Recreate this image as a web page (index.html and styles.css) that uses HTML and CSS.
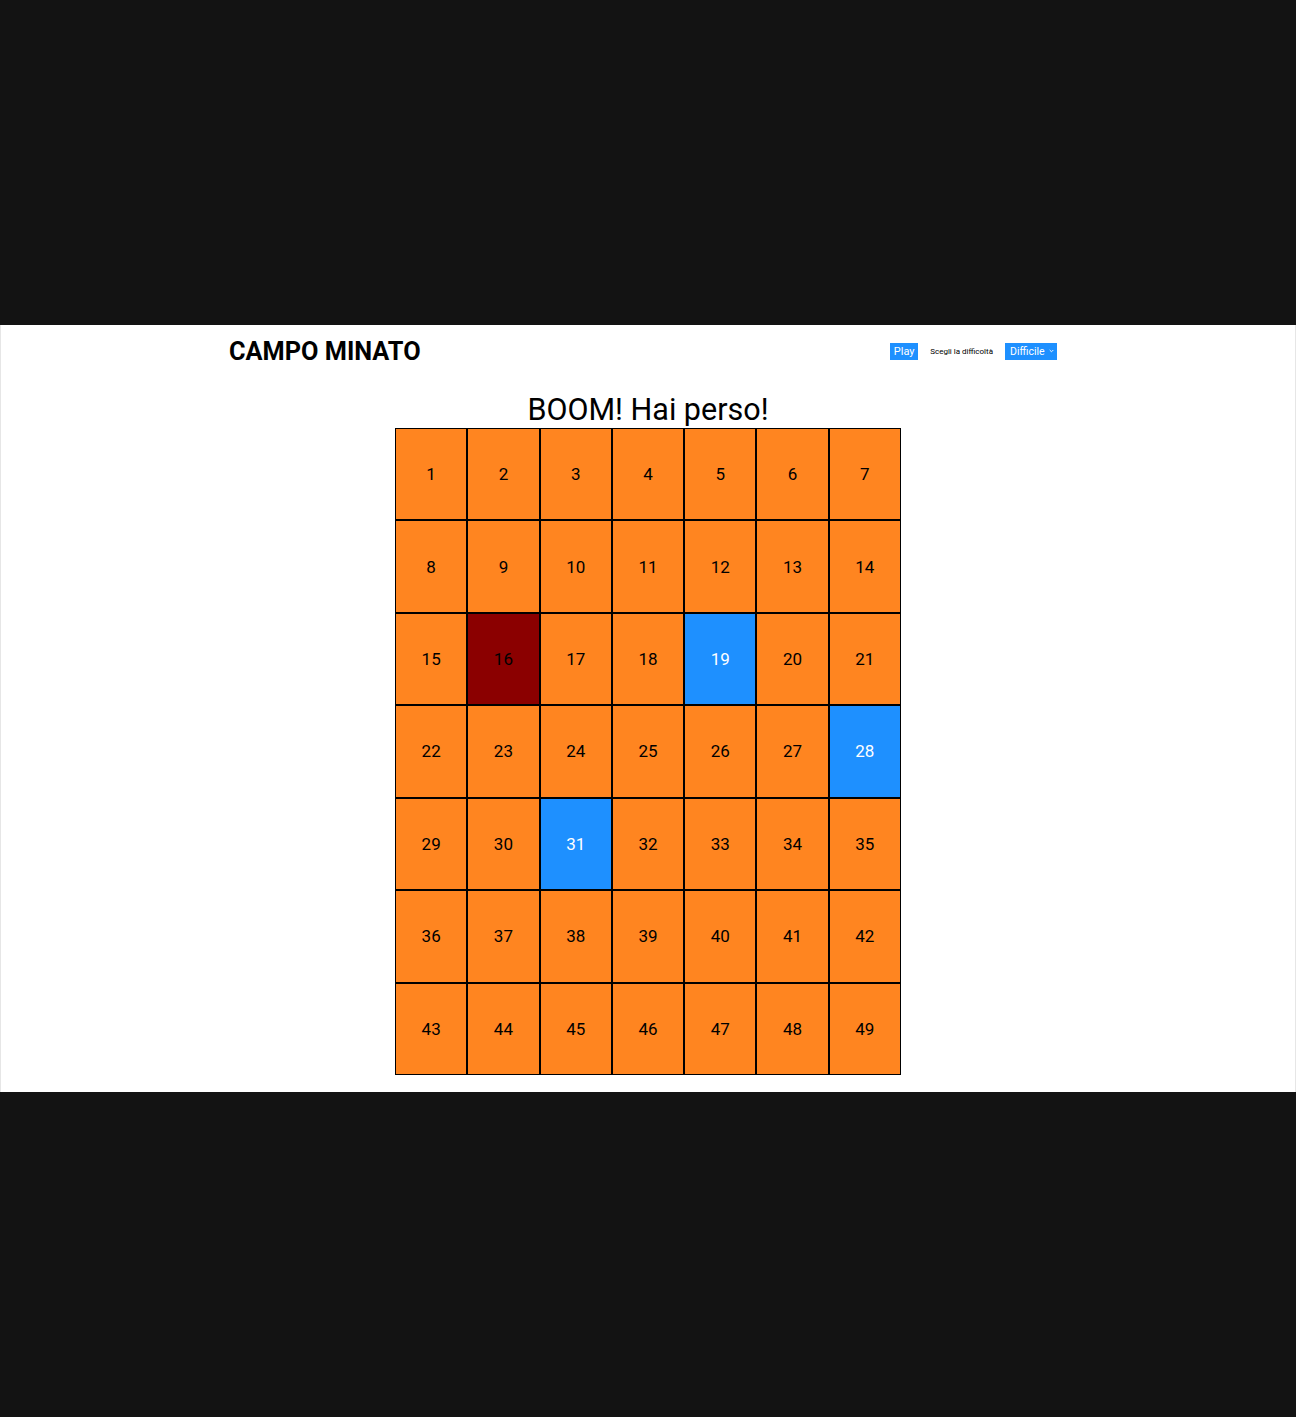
FILE: index.html
```html
<!DOCTYPE html>
<html>
<head>
	<meta charset="utf-8">
	<title>Campo Minato</title>
	<link rel="stylesheet" href="styles.css">
</head>
<body>
<div id="page">
	<div class="head">
		<h1 class="logo">CAMPO MINATO</h1>
		<div class="controls">
			<button class="btn">Play</button>
			<label class="label" for="level">Scegli la difficoltà</label>
			<div class="select" id="level">
				<span>Difficile</span>
				<svg width="5" height="4" viewBox="0 0 5 4"><path d="M0.7 1 L2.5 2.8 L4.3 1" fill="none" stroke="#fff" stroke-width="0.9"/></svg>
			</div>
		</div>
	</div>
	<h2 class="msg">BOOM! Hai perso!</h2>
	<div id="grid"></div>
</div>

<script type="text/javascript">
	var grid=document.getElementById('grid');
	var bombs=[16];
	var safe=[19,28,31];
	for(var i=1;i<=49;i++){
		var cell=document.createElement('div');
		cell.className='cell';
		if(bombs.indexOf(i)!=-1) cell.className+=' bomb';
		if(safe.indexOf(i)!=-1) cell.className+=' clicked';
		cell.innerHTML=i;
		grid.appendChild(cell);
	}
</script>
</body>
</html>
```

FILE: styles.css
```css
html,body{
	margin: 0;
	padding: 0;
}
body{
	background: #131313;
	min-height: 1417px;
	display: flex;
	flex-direction: column;
	justify-content: center;
	font-family: Roboto, "Liberation Sans", sans-serif;
}
#page{
	height: 767px;
	background: #fff;
	border-left: 1px solid #e6e6e6;
	border-right: 1px solid #e6e6e6;
	box-sizing: border-box;
}
.head{
	width: 838px;
	height: 52px;
	margin: 0 auto;
	padding-right: 10px;
	box-sizing: border-box;
	display: flex;
	align-items: center;
	justify-content: space-between;
}
.logo{
	margin: 0;
	font-size: 25.3px;
	font-weight: 700;
	color: #000;
}
.controls{
	display: flex;
	align-items: center;
	gap: 12px;
}
.btn{
	margin: 0;
	border: none;
	background: #1e90ff;
	color: #fff;
	font-family: inherit;
	font-size: 11px;
	height: 17px;
	width: 28px;
	padding: 0;
}
.label{
	font-size: 8px;
	color: #000;
}
.select{
	width: 52px;
	height: 17px;
	background: #1e90ff;
	color: #fff;
	font-size: 10.5px;
	display: flex;
	align-items: center;
	justify-content: space-between;
	padding: 0 3px 0 5px;
	box-sizing: border-box;
}
.msg{
	margin: 15px 0 0;
	font-size: 30.5px;
	line-height: 36px;
	font-weight: 400;
	text-align: center;
	color: #000;
}
#grid{
	width: 506px;
	margin: 0 auto;
	display: grid;
	grid-template-columns: repeat(7, 1fr);
	grid-auto-rows: 92.43px;
}
.cell{
	background: #ff8520;
	border: 1px solid #000;
	box-sizing: border-box;
	display: flex;
	align-items: center;
	justify-content: center;
	font-size: 17px;
	color: #000;
}
.cell.bomb{
	background: #8b0000;
}
.cell.clicked{
	background: #1e90ff;
	color: #fff;
}
```
